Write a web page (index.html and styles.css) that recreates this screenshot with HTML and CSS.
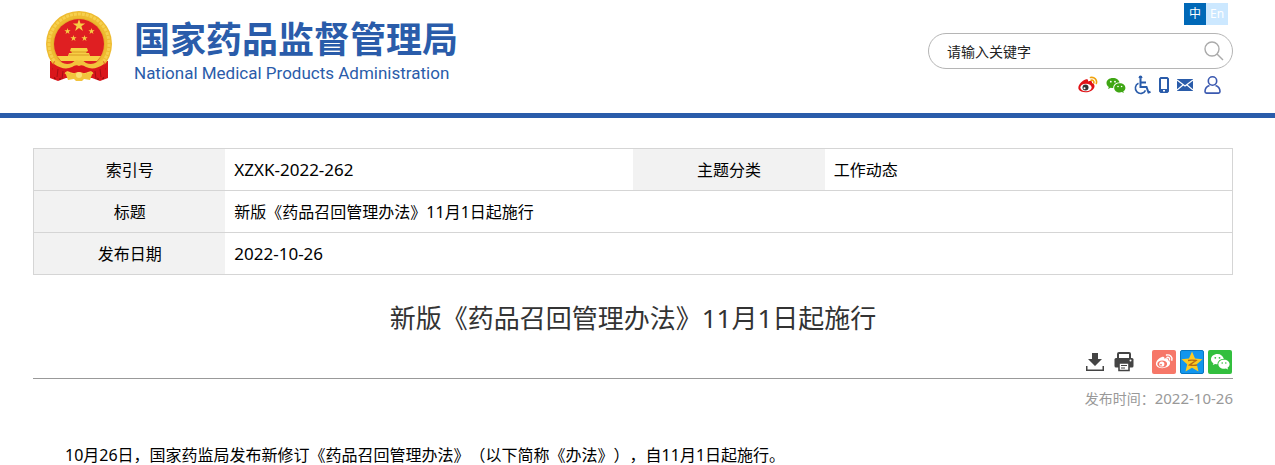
FILE: index.html
```
<!DOCTYPE html>
<html lang="zh-CN">
<head>
  <meta charset="UTF-8">
  <meta name="viewport" content="width=device-width, initial-scale=1.0">
  <title>新版《药品召回管理办法》11月1日起施行</title>
  <link rel="stylesheet" href="styles.css">
</head>
<body>
  <header class="header">
    <a class="logo" href="#">
      <svg class="emblem" viewBox="0 0 66 70" aria-hidden="true">
        <path d="M4 50l0 17 8 3 8-3h26l8 3 8-3 0-17z" fill="#d9161c"/>
        <path d="M7 57l2 11M12 57l2 12M54 57l-2 12M59 57l-2 11" stroke="#8f0d12" stroke-width="1.5"/>
        <circle cx="33" cy="33" r="33" fill="#eebb30"/>
        <circle cx="33" cy="33" r="30" fill="none" stroke="#f6d04e" stroke-width="3" stroke-dasharray="3 1"/>
        <circle cx="33" cy="33" r="26" fill="#e5ad2b"/>
        <circle cx="33" cy="33" r="25" fill="#df1f22"/>
        <g fill="#f7cf45">
          <path id="star" d="M33 8l1.5 4.5h4.700l-3.800 2.800 1.500 4.700-3.900-2.900-3.900 2.900 1.500-4.700-3.800-2.800h4.700z"/>
          <use href="#star" transform="translate(5 13) scale(.5)"/>
          <use href="#star" transform="translate(29 13) scale(.5)"/>
          <use href="#star" transform="translate(11 20) scale(.5)"/>
          <use href="#star" transform="translate(22 20) scale(.5)"/>
          <path d="M25 37h16l1 3-2 1v1h3l1 3h-22l1-3h3v-1l-2-1zM11 45h44l-4 5H15z"/>
        </g>
        <path d="M25 41h16M23 44h20" stroke="#d99a22"/>
        <path d="M8 50q10 5 17 3 4-5 8-2 4-3 8 2 7 2 17-3l3 15-8 3-8-8q-12 5-24 0l-8 8-8-3z" fill="#da161b"/>
        <path d="M9 48q9 7 17 4 4-4 7-2 3-2 7 2 8 3 17-4l1 5q-10 7-18 3-4-3-7-1-3-2-7 1-8 4-18-3z" fill="#f2c33c"/>
        <path d="M19 61l8 2q6-4 12 0l8-2-3 8-6-1-2 2h-6l-2-2-6 1z" fill="#f2c33c"/>
        <path d="M12 58l-1 8M17 60l-1 8M54 58l1 8M49 60l1 8" stroke="#a50f13"/>
        <circle cx="33" cy="64" r="3" fill="#fbe074"/>
      </svg>
      <span class="logo-text">
        <strong class="logo-cn">国家药品监督管理局</strong>
        <span class="logo-en">National Medical Products Administration</span>
      </span>
    </a>

    <div class="header-side">
      <nav class="lang">
        <a class="lang-link active" href="#">中</a>
        <a class="lang-link" href="#">En</a>
      </nav>
      <form class="search">
        <input class="search-input" type="text" placeholder="请输入关键字" aria-label="请输入关键字">
        <button class="search-btn" type="button" aria-label="搜索">
          <svg width="20" height="20" viewBox="0 0 20 20" fill="none" stroke="#aaa" stroke-width="1.400"><circle cx="8" cy="8" r="7"/><path d="M13 13l6 6"/></svg>
        </button>
      </form>
      <nav class="quick">
        <a href="#" aria-label="微博">
          <svg width="20" height="18" viewBox="0 0 20 18">
            <path d="M7.500 3.500c2-.8 3 .2 2.500 2 2.500-1 4.500-.5 4 1.500 4 1.500 3 6-1 8-4 2.200-11 1.500-12.500-2C-.5 9 4 4.800 7.500 3.500z" fill="#e01216"/>
            <ellipse cx="8" cy="11.500" rx="5.600" ry="3.800" fill="#fff"/>
            <circle cx="7.500" cy="11.500" r="3" fill="#333"/>
            <circle cx="6.500" cy="12.300" r="1" fill="#fff"/>
            <path d="M12.500 1.500c4-.8 7 2.500 5.800 6M13 4.200c2-.4 3.300 1 2.800 2.800" fill="none" stroke="#f0a30f" stroke-width="1.600" stroke-linecap="round"/>
          </svg>
        </a>
        <a href="#" aria-label="微信">
          <svg width="20" height="18" viewBox="0 0 20 18">
            <path d="M7 2C3 2 .5 4.200.5 7c0 1.700.9 3 2.300 4L2 13l2.700-1.200c.8.200 1.500.2 2.500.2 0-3.500 2.500-5.500 6.300-5.500C13 3.800 10.400 2 7 2z" fill="#3fa614"/>
            <path d="M13.800 7.300c-3.200 0-5.600 2-5.600 4.600s2.400 4.500 5.600 4.500c.7 0 1.300-.1 2-.3l2 1-.5-1.800c1.300-.8 2.100-2 2.100-3.400 0-2.600-2.400-4.600-5.600-4.600z" fill="#3fa614"/>
            <g fill="#fff"><circle cx="4.800" cy="5.700" r=".9"/><circle cx="9" cy="5.700" r=".9"/><circle cx="12" cy="10.500" r=".8"/><circle cx="15.600" cy="10.500" r=".8"/></g>
          </svg>
        </a>
        <a href="#" aria-label="无障碍">
          <svg width="17" height="20" viewBox="0 0 17 20" fill="none" stroke="#2a5caa" stroke-width="1.600">
            <circle cx="6.500" cy="2.200" r="1.800" fill="#2a5caa" stroke="none"/>
            <path d="M6.500 4v8h6l2 5.500 2-.8M7 7.500h5" stroke-width="2"/>
            <path d="M4.500 8.300a5.300 5.300 0 1 0 7 7"/>
          </svg>
        </a>
        <a href="#" aria-label="手机版">
          <svg width="10" height="16" viewBox="0 0 10 16"><path fill="#2a5caa" fill-rule="evenodd" d="M1.500 0h7L10 1.500v13L8.500 16h-7L0 14.500v-13zM2 2v10h6V2zM4 13v1.500h2V13z"/></svg>
        </a>
        <a href="#" aria-label="邮箱">
          <svg width="16" height="12" viewBox="0 0 16 12"><path fill="#2a5caa" d="M0 0h16v12H0z"/><path d="M0 1l8 6 8-6M0 11l6-5M16 11l-6-5" fill="none" stroke="#fff" stroke-width="1.200"/></svg>
        </a>
        <a class="quick-user" href="#" aria-label="个人中心">
          <svg width="17" height="18" viewBox="0 0 17 18" fill="none" stroke="#3b59b0" stroke-width="1.600"><circle cx="8.500" cy="5" r="4.200"/><path d="M5.500 9.500C2.500 10.500 1 12.500 1 15.500c0 1 .5 1.600 1.500 1.600h12c1 0 1.500-.6 1.500-1.600 0-3-1.500-5-4.500-6"/></svg>
        </a>
      </nav>
    </div>
  </header>

  <main class="main">
    <table class="info">
      <tr>
        <th scope="row">索引号</th>
        <td class="num">XZXK-2022-262</td>
        <th scope="row">主题分类</th>
        <td>工作动态</td>
      </tr>
      <tr>
        <th scope="row">标题</th>
        <td colspan="3">新版《药品召回管理办法》11月1日起施行</td>
      </tr>
      <tr>
        <th scope="row">发布日期</th>
        <td class="num" colspan="3">2022-10-26</td>
      </tr>
    </table>

    <h1 class="title">新版《药品召回管理办法》11月1日起施行</h1>

    <div class="tools">
      <button class="tool" type="button" aria-label="下载">
        <svg width="18" height="18" viewBox="0 0 18 18" fill="#444"><path d="M6 0h6v6h4l-7 7-7-7h4z"/><path d="M0 13h1.500v3.500h15V13H18v5H0z"/></svg>
      </button>
      <button class="tool" type="button" aria-label="打印">
        <svg width="20" height="20" viewBox="0 0 20 20"><path d="M4 6V2q0-1 1-1h10q1 0 1 1v4" fill="none" stroke="#444" stroke-width="2"/><path d="M2 6h16q1.500 0 1.500 1.500V14q0 1.500-1.500 1.500H2Q.5 15.500.5 14V7.500Q.5 6 2 6z" fill="#444"/><path d="M5 11h10v7.500H5z" fill="#fff" stroke="#444" stroke-width="1.600"/><path d="M7 13.500h6M7 16h4" stroke="#444" stroke-width="1.200"/><circle cx="16.500" cy="8.500" r="1" fill="#fff"/></svg>
      </button>
      <div class="share">
        <a href="#" aria-label="分享到微博">
          <svg width="24" height="24" viewBox="0 0 24 24">
            <rect width="24" height="24" rx="2" fill="#f67768"/>
            <path d="M10 7c1.800-.6 2.700.2 2.300 1.700 2.500-.8 4.300-.2 3.700 1.600 3.300 1.300 2.500 5-.8 6.800-3.700 2-9.800 1.400-11-1.800C2.900 12 6.500 8.200 10 7z" fill="#fff"/>
            <ellipse cx="10.200" cy="14" rx="4.900" ry="3.400" fill="#f67768"/>
            <circle cx="9.800" cy="14" r="2.600" fill="#fff"/>
            <circle cx="9" cy="14.700" r=".9" fill="#f67768"/>
            <path d="M14.500 5c3.600-.7 6.300 2 5.300 5.200M15 7.400c1.800-.4 2.900.8 2.500 2.400" fill="none" stroke="#fff" stroke-width="1.400" stroke-linecap="round"/>
          </svg>
        </a>
        <a href="#" aria-label="分享到QQ空间">
          <svg width="24" height="24" viewBox="0 0 24 24">
            <rect x=".5" y=".5" width="23" height="23" rx="1.500" fill="#1296ee" stroke="#0876bf"/>
            <path d="M12 1.500l3 7 7.500.7-5.700 5 1.700 7.400L12 17.800l-6.500 3.800 1.700-7.400-5.700-5L9 8.500z" fill="#fbcb20"/>
            <path d="M8 10.500q4-.8 8 0L9.500 15q4 .7 7.500 0" fill="none" stroke="#b86912" stroke-width="1.300"/>
          </svg>
        </a>
        <a href="#" aria-label="分享到微信">
          <svg width="24" height="24" viewBox="0 0 24 24">
            <rect width="24" height="24" rx="2" fill="#32bf3e"/>
            <path d="M9.500 4C5.800 4 3 6.300 3 9.200c0 1.700.9 3.100 2.400 4L4.800 15l2.300-1c.8.200 1.500.3 2.400.3 0-3.400 2.800-5.300 6.300-5.300C15.200 6 12.700 4 9.500 4z" fill="#fff"/>
            <path d="M16 9.700c-3.200 0-5.600 2-5.600 4.500s2.400 4.500 5.600 4.500c.7 0 1.300-.1 1.900-.3l2.200 1-.6-1.700c1.300-.8 2.100-2 2.100-3.500 0-2.500-2.400-4.500-5.600-4.500z" fill="#fff"/>
            <g fill="#32bf3e"><circle cx="7.300" cy="7.800" r=".9"/><circle cx="11.500" cy="7.800" r=".9"/><circle cx="14.200" cy="13" r=".8"/><circle cx="17.800" cy="13" r=".8"/></g>
          </svg>
        </a>
      </div>
    </div>
    <p class="date">发布时间：<time datetime="2022-10-26">2022-10-26</time></p>

    <div class="content">
      <p>10月26日，国家药监局发布新修订《药品召回管理办法》（以下简称《办法》），自11月1日起施行。</p>
    </div>
  </main>
</body>
</html>
```
FILE: styles.css
```
* {
  box-sizing: border-box;
}
body {
  margin: 0;
  background: #fff;
  color: #000;
  font-family: "Noto Sans", "Noto Sans CJK SC", sans-serif;
  font-size: 16px;
  text-spacing-trim: space-all;
}
a {
  color: inherit;
  text-decoration: none;
}
svg {
  display: block;
}
button {
  padding: 0;
  border: none;
  background: none;
  cursor: pointer;
}

/* header */
.header {
  display: flex;
  justify-content: space-between;
  align-items: flex-start;
  padding: 3px 42px 18px 46px;
  border-bottom: 5px solid #2a5caa;
}
.logo {
  display: flex;
  gap: 22px;
  padding-top: 8px;
  color: #2a5caa;
}
.emblem {
  width: 66px;
  height: 70px;
}
.logo-text {
  display: flex;
  flex-direction: column;
  padding-top: 6px;
}
.logo-cn {
  font-family: "Noto Sans CJK SC", sans-serif;
  font-size: 36px;
  line-height: 40px;
  font-weight: bold;
}
.logo-en {
  font-family: Roboto, sans-serif;
  font-size: 17px;
  line-height: 32px;
}
.header-side {
  display: flex;
  flex-direction: column;
  align-items: flex-end;
  width: 305px;
}
.lang {
  display: flex;
  padding-right: 5px;
}
.lang-link {
  width: 22px;
  height: 22px;
  background: #cce8ff;
  color: #fff;
  font-size: 12px;
  line-height: 22px;
  text-align: center;
}
.lang-link.active {
  background: #0068b7;
}
.search {
  display: flex;
  align-items: center;
  width: 100%;
  height: 36px;
  margin-top: 8px;
  padding: 0 8px 0 18px;
  border: 1px solid #b5b5b5;
  border-radius: 18px;
}
.search-input {
  flex: 1;
  min-width: 0;
  padding: 0;
  border: none;
  outline: none;
  background: none;
  font-family: inherit;
  font-size: 14px;
}
.search-input::placeholder {
  color: #222;
}
.quick {
  display: flex;
  align-items: center;
  gap: 8px;
  height: 20px;
  margin-top: 6px;
  padding-right: 12px;
}
.quick-user {
  padding-left: 3px;
}

/* info table */
.main {
  padding: 30px 42px 0 33px;
}
.info {
  width: 100%;
  border: 1px solid #d5d5d5;
  border-collapse: collapse;
  table-layout: fixed;
}
.info tr {
  border-bottom: 1px solid #d5d5d5;
}
.info th,
.info td {
  height: 42px;
  padding: 0 9px;
  line-height: 24px;
}
.info th {
  width: 16%;
  background: #f2f2f2;
  font-weight: normal;
  text-align: center;
}
.info .num {
  font-size: 17px;
}

/* article */
.title {
  margin: 24px 0 12px;
  color: #333;
  font-size: 26px;
  line-height: 39px;
  font-weight: normal;
  text-align: center;
}
.tools {
  display: flex;
  justify-content: flex-end;
  align-items: center;
  gap: 10px;
  padding: 0 1px 4px 0;
  border-bottom: 1px solid #999;
}
.share {
  display: flex;
  gap: 4px;
  margin-left: 8px;
}
.date {
  margin: 8px 0 0;
  color: #999;
  font-size: 14px;
  line-height: 22px;
  text-align: right;
}
.date time {
  font-size: 15px;
}
.content {
  padding-top: 31px;
  line-height: 28px;
}
.content p {
  margin: 0;
  text-indent: 2em;
}
```
